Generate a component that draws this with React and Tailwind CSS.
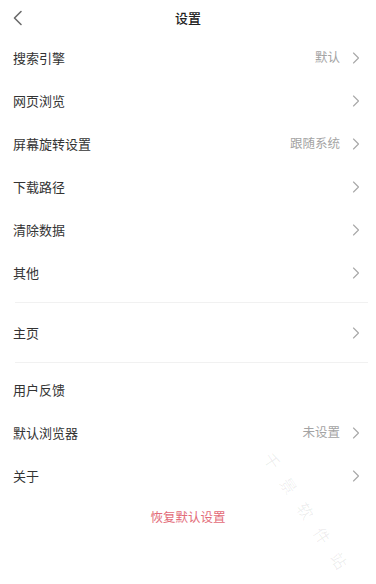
import React from "react";

const font = { fontFamily: '"Noto Sans CJK SC", "Noto Sans", sans-serif' };

const Chevron = () => (
  <svg width="8" height="12" viewBox="0 0 8 12" fill="none" className="ml-[12px]">
    <path d="M1.5 1 L6.5 6 L1.5 11" stroke="#a8a8a8" strokeWidth="1.1" strokeLinecap="round" strokeLinejoin="round" />
  </svg>
);

const Row = ({ label, value }) => (
  <div className="flex items-center h-[43px] pl-[13px] pr-[16px]">
    <span className="flex-1 text-[13px] text-[#333]">{label}</span>
    {value && <span className="text-[12.5px] text-[#a3a3a3]">{value}</span>}
    <Chevron />
  </div>
);

const Divider = ({ className }) => (
  <div className={"pl-[15px] pr-[8px] " + className}>
    <div className="h-px bg-[#f1f1f1]" />
  </div>
);

const App = () => {
  return (
    <div className="relative w-[376px] h-[584px] bg-white overflow-hidden" style={font}>
      <div className="relative flex items-center justify-center h-[36px]">
        <svg width="12" height="16" viewBox="0 0 12 16" fill="none" className="absolute left-[12px] top-[10px]">
          <path d="M9 1.5 L2.5 8 L9 14.5" stroke="#6b6b6b" strokeWidth="1.6" strokeLinecap="round" strokeLinejoin="round" />
        </svg>
        <span className="text-[13px] font-medium text-[#222]">设置</span>
      </div>

      <Row label="搜索引擎" value="默认" />
      <Row label="网页浏览" />
      <Row label="屏幕旋转设置" value="跟随系统" />
      <Row label="下载路径" />
      <Row label="清除数据" />
      <Row label="其他" />
      <Divider className="py-[8px]" />
      <Row label="主页" />
      <Divider className="pt-[8px] pb-[5px]" />
      <div className="flex items-center h-[43px] pl-[13px]">
        <span className="text-[13px] text-[#333]">用户反馈</span>
      </div>
      <Row label="默认浏览器" value="未设置" />
      <Row label="关于" />

      <div className="flex justify-center pt-[11px]">
        <span className="text-[12.5px] text-[#e36b78]">恢复默认设置</span>
      </div>

      <div className="absolute left-[268px] top-[442px] rotate-[56deg] origin-left whitespace-nowrap text-[16px] tracking-[14px] text-[#000]/[0.07] pointer-events-none">
        千景软件站
      </div>
    </div>
  );
};

export default App;
